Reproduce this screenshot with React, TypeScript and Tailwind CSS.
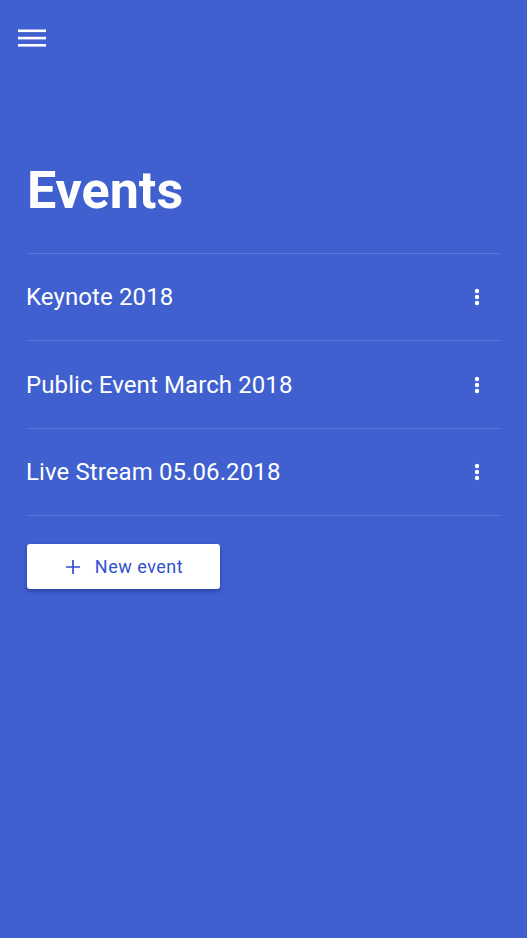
import React from 'react';

const events = ['Keynote 2018', 'Public Event March 2018', 'Live Stream 05.06.2018'];

const MoreIcon = () => (
  <svg width="6" height="18" viewBox="0 0 6 18" fill="white">
    <circle cx="3" cy="3" r="2.2" />
    <circle cx="3" cy="9" r="2.2" />
    <circle cx="3" cy="15" r="2.2" />
  </svg>
);

const App: React.FC = () => {
  return (
    <div className="min-h-screen w-full bg-[#4060d0] text-white font-['Roboto',sans-serif]">
      {/* Top bar */}
      <div className="pt-[29px] pl-[18px]">
        <svg width="28" height="18" viewBox="0 0 28 18" fill="white">
          <rect x="0" y="0.5" width="28" height="2.6" />
          <rect x="0" y="7.8" width="28" height="2.6" />
          <rect x="0" y="15" width="28" height="2.6" />
        </svg>
      </div>

      <div className="px-[27px]">
        <h1 className="mt-[118px] mb-[36px] text-[52px] leading-[52px] font-bold">Events</h1>

        <ul className="border-t border-white/15">
          {events.map((name) => (
            <li key={name} className="flex items-center justify-between h-[87.4px] border-b border-white/15">
              <span className="text-[24px] leading-none tracking-[0.1px] -ml-px">{name}</span>
              <button className="mr-[20px] flex items-center justify-center">
                <MoreIcon />
              </button>
            </li>
          ))}
        </ul>

        <button className="mt-[28px] w-[193px] h-[45px] bg-white rounded-[3px] shadow-[0_2px_4px_rgba(10,20,90,0.45)] flex items-center justify-center gap-[15px] pl-[2px] text-[#2f50cf]">
          <svg width="14" height="14" viewBox="0 0 14 14" stroke="currentColor" strokeWidth="1.7">
            <path d="M7 0v14M0 7h14" />
          </svg>
          <span className="text-[18px] tracking-[0.5px]">New event</span>
        </button>
      </div>
    </div>
  );
};

export default App;
